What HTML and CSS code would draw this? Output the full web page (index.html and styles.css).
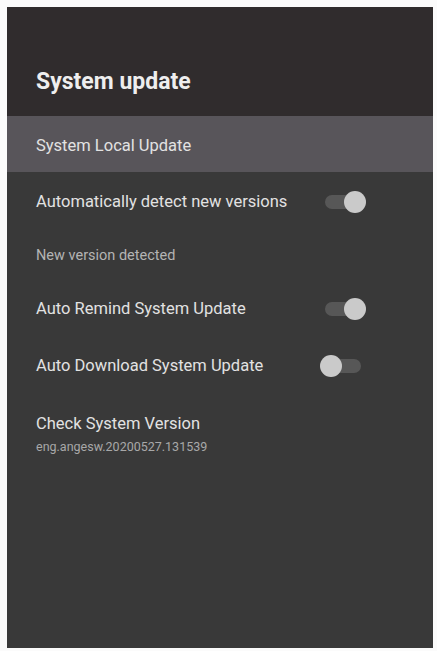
FILE: index.html
```html
<!DOCTYPE html>
<html lang="en" dir="ltr">
  <head>
    <meta charset="utf-8">
    <title>System update</title>
    <link rel="stylesheet" href="styles.css">
  </head>
  <body>

    <div class="panel">
      <div class="header">
        <h1>System update</h1>
      </div>

      <div class="row row-focus">
        <span class="label">System Local Update</span>
      </div>

      <div class="row row-switch">
        <span class="label">Automatically detect new versions</span>
        <span class="switch on"><span class="track"></span><span class="thumb"></span></span>
      </div>

      <div class="row row-info">
        <span class="info">New version detected</span>
      </div>

      <div class="row row-switch">
        <span class="label">Auto Remind System Update</span>
        <span class="switch on"><span class="track"></span><span class="thumb"></span></span>
      </div>

      <div class="row row-switch">
        <span class="label">Auto Download System Update</span>
        <span class="switch"><span class="track"></span><span class="thumb"></span></span>
      </div>

      <div class="row row-version">
        <span class="label">Check System Version</span>
        <span class="sub">eng.angesw.20200527.131539</span>
      </div>
    </div>

  </body>
</html>
```

FILE: styles.css
```css
html {
  font-family: Roboto, "Noto Sans", sans-serif;
}

body {
  margin: 0;
  padding: 7px 4px 3px 7px;
  background: #fbfbfb;
}

.panel {
  height: 641px;
  background: #393939;
  display: flex;
  flex-direction: column;
}

.header {
  height: 109px;
  background: #302c2d;
  display: flex;
  align-items: flex-end;
  padding: 0 29px 21px;
  box-sizing: border-box;
}

.header h1 {
  margin: 0;
  font-size: 23px;
  line-height: 26px;
  font-weight: 700;
  color: #eeeeee;
}

.row {
  display: flex;
  align-items: center;
  padding: 3px 29px 0;
  box-sizing: border-box;
}

.label {
  font-size: 16.5px;
  line-height: 20px;
  color: #e2e2e2;
}

.row-focus {
  height: 56px;
  background: #58555a;
  padding-top: 4px;
}

.row-switch {
  height: 57px;
  justify-content: space-between;
}

.row-switch:first-of-type {
  height: 58px;
}

.row-info {
  height: 50px;
}

.info {
  font-size: 14.5px;
  color: #b4b4b4;
}

.row-version {
  flex-direction: column;
  align-items: flex-start;
  padding-top: 21px;
}

.sub {
  margin-top: 5px;
  font-size: 12.5px;
  line-height: 15px;
  color: #a8a8a8;
}

/* toggle: grey track with a round thumb that overhangs it */
.switch {
  position: relative;
  width: 46px;
  height: 22px;
  margin-right: 38px;
}

.switch .track {
  position: absolute;
  left: 5px;
  right: 5px;
  top: 4px;
  height: 14px;
  border-radius: 7px;
  background: #575757;
}

.switch .thumb {
  position: absolute;
  left: 0;
  top: 0;
  width: 22px;
  height: 22px;
  border-radius: 50%;
  background: #cacaca;
}

.switch.on .thumb {
  left: 24px;
}
```
